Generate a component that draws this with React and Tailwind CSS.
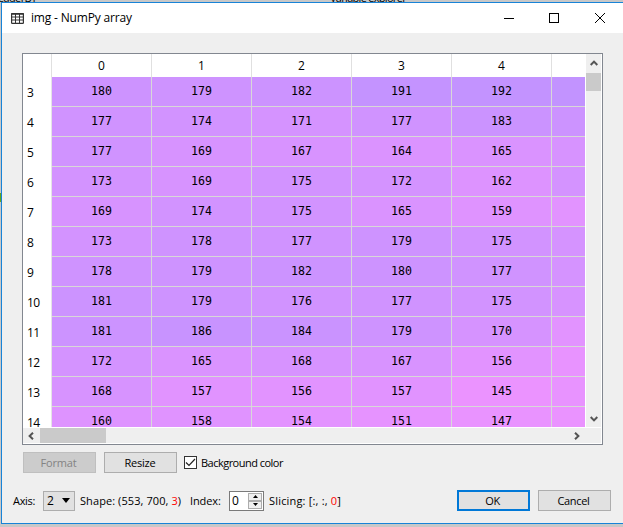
import React from "react";

const rows = [
  [3, [180, 179, 182, 191, 192, 193]],
  [4, [177, 174, 171, 177, 183, 182]],
  [5, [177, 169, 167, 164, 165, 168]],
  [6, [173, 169, 175, 172, 162, 172]],
  [7, [169, 174, 175, 165, 159, 156]],
  [8, [173, 178, 177, 179, 175, 171]],
  [9, [178, 179, 182, 180, 177, 171]],
  [10, [181, 179, 176, 177, 175, 168]],
  [11, [181, 186, 184, 179, 170, 156]],
  [12, [172, 165, 168, 167, 156, 149]],
  [13, [168, 157, 156, 157, 145, 148]],
  [14, [160, 158, 154, 151, 147, 146]],
];

const cellColor = (v) => `rgb(${Math.round(235 - (v - 145) * 0.85)}, 147, 255)`;

function GridIcon() {
  return (
    <svg width="13" height="11" viewBox="0 0 13 11" fill="none" stroke="#333">
      <rect x=".6" y=".6" width="11.8" height="9.8" rx=".6" strokeWidth="1.2" />
      <path d="M0 1H13" strokeWidth="1.4" />
      <path d="M0 4H13M0 7H13M4.5 0V11M8.5 0V11" />
    </svg>
  );
}

function Chevron({ className = "" }) {
  return (
    <svg className={className} width="8" height="6" viewBox="0 0 8 6" fill="none" stroke="#555" strokeWidth="2">
      <path d="M.7 5L4 1.6L7.3 5" />
    </svg>
  );
}

function Table() {
  return (
    <div className="ml-[20px] mt-[20px] flex h-[392px] w-[581px] flex-col border border-[#828790] bg-white">
      <div className="flex h-[373px] shrink-0">
        <div className="flex h-[373px] w-[562px] flex-col overflow-hidden">
          <div className="flex h-[23px] shrink-0">
            <div className="w-[29px] shrink-0 border-r border-[#e0e0e0]" />
            {[0, 1, 2, 3, 4].map((n) => (
              <div key={n} className="flex w-[100px] shrink-0 items-center justify-center border-r border-[#e0e0e0] pt-px text-[12px]">
                {n}
              </div>
            ))}
          </div>
          {rows.map(([label, values]) => (
            <div key={label} className="flex h-[30px] shrink-0">
              <div className="w-[29px] shrink-0 border-r border-[#e5e5e5] pl-[4px] pt-[8px] text-[12px] leading-[16px] tracking-[-0.5px]">
                {label}
              </div>
              {values.map((v, i) => (
                <div
                  key={i}
                  className="w-[100px] shrink-0 border-b border-r border-[#d8d8d8] pt-[6px] text-center font-['DejaVu_Sans_Mono',monospace] text-[11.6px] leading-[16px]"
                  style={{ backgroundColor: cellColor(v) }}
                >
                  {i < 5 ? v : ""}
                </div>
              ))}
            </div>
          ))}
        </div>
        <div className="ml-px flex w-[15px] flex-col items-center bg-[#efefef]">
          <Chevron className="mt-[6px]" />
          <div className="mt-[7px] h-[18px] w-full bg-[#cacaca]" />
          <Chevron className="mb-[5px] mt-auto rotate-180" />
        </div>
      </div>
      <div className="mt-px flex h-[15px] w-[578px] items-center bg-[#efefef]">
        <Chevron className="ml-[4px] -rotate-90" />
        <div className="ml-[5px] h-full w-[66px] bg-[#cacaca]" />
        <Chevron className="ml-auto mr-[20px] rotate-90" />
      </div>
    </div>
  );
}

export default function App() {
  return (
    <div className="relative h-[527px] w-[623px] overflow-hidden bg-[#c8c8c8] pl-px pt-[2px] font-['Open_Sans','Noto_Sans',sans-serif] text-[11px] text-black">
      <div className="absolute left-[-6px] top-[-10px] text-[11px] leading-[16px] tracking-[-0.6px]">readerBY</div>
      <div className="absolute left-[330px] top-[-10px] text-[11px] leading-[16px] tracking-[-0.7px]">Variable explorer</div>
      <div className="absolute left-0 top-[193px] h-[9px] w-px bg-[#62a51b]" />
      <div className="relative flex h-[522px] w-[640px] flex-col border border-[#1883d7] bg-[#efefef]">
        <div className="flex h-[30px] shrink-0 items-center bg-white">
          <div className="ml-[9px]"><GridIcon /></div>
          <div className="ml-[7px] w-[300px] whitespace-nowrap text-[12px] leading-[16px] tracking-[-0.17px]">
            img - NumPy array
          </div>
          <svg className="ml-[172px]" width="104" height="12" viewBox="0 0 104 12" fill="none" stroke="#000">
            <path d="M1 6.5H11M46.5 1.5H55.5V10.5H46.5Z" shapeRendering="crispEdges" />
            <path d="M92 1L102 11M102 1L92 11" />
          </svg>
        </div>
        <Table />
        <div className="ml-[21px] mt-[7px] flex h-[21px] items-center whitespace-nowrap">
          <div className="flex h-[21px] w-[73px] items-center justify-center border border-[#bfbfbf] bg-[#cccccc] pr-[2px] pt-[2px] tracking-[-0.2px] text-[#838383]">Format</div>
          <div className="ml-[8px] flex h-[21px] w-[73px] items-center justify-center border border-[#adadad] bg-[#e1e1e1] pr-[1px] pt-[2px] tracking-[-0.2px]">Resize</div>
          <div className="ml-[7px] h-[13px] w-[13px] border border-[#333] bg-white">
            <svg width="11" height="11" viewBox="0 0 11 11" fill="none" stroke="#222" strokeWidth="1.2">
              <path d="M1 5.5L4 8.5L10 2" />
            </svg>
          </div>
          <span className="ml-[4px] pt-[2px] tracking-[-0.52px]">Background color</span>
        </div>
        <div className="ml-[11px] mt-[17px] flex h-[21px] w-[598px] items-center whitespace-nowrap tracking-[-0.3px]">
          <span className="w-[30px] pt-[2px]">Axis:</span>
          <div className="flex h-[20px] w-[32px] items-center border border-[#adadad] bg-[#e1e1e1] pl-[3px] pt-px text-[12px]">
            2
            <svg className="mb-[2px] ml-[8px]" width="8" height="5" viewBox="0 0 8 5"><path d="M0 0H8L4 5Z" /></svg>
          </div>
          <span className="ml-[5px] w-[110px] pt-[2px] tracking-[0.08px]">Shape: (553, 700, <span className="text-[#ff0000]">3</span>)</span>
          <span className="w-[39px] pt-[2px] tracking-[-0.1px]">Index:</span>
          <div className="flex h-[20px] w-[35px] items-center border border-[#7a7a7a] bg-white pl-[2px] text-[12px]">
            <span className="pt-px">0</span>
            <div className="ml-auto mr-[1px] flex w-[14px] flex-col">
              <div className="flex h-[8px] items-center justify-center border border-[#adadad] bg-[#efefef]"><svg width="5" height="3" viewBox="0 0 5 3"><path d="M2.5 0L5 3H0Z" /></svg></div>
              <div className="flex h-[8px] items-center justify-center border border-[#adadad] bg-[#efefef]"><svg width="5" height="3" viewBox="0 0 5 3"><path d="M2.5 3L5 0H0Z" /></svg></div>
            </div>
          </div>
          <span className="ml-[5px] pt-[2px] tracking-[0.18px]">Slicing: [:, :, <span className="text-[#ff0000]">0</span>]</span>
          <div className="ml-auto flex h-[21px] w-[73px] items-center justify-center border-2 border-[#0078d7] bg-[#e1e1e1] pr-[2px] pt-[2px]">OK</div>
          <div className="ml-[8px] flex h-[21px] w-[73px] items-center justify-center border border-[#adadad] bg-[#e1e1e1] pr-[2px] pt-[2px]">Cancel</div>
        </div>
      </div>
    </div>
  );
}
